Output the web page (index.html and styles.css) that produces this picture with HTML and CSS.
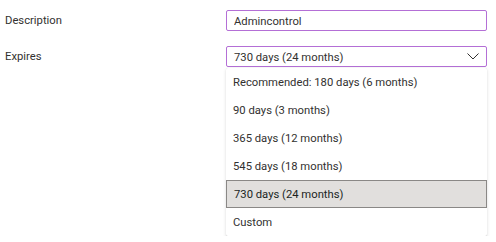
FILE: index.html
```html
<!DOCTYPE html>
<html lang="en">

<head>
  <meta charset="UTF-8">
  <title>Secret settings</title>
  <link rel="stylesheet" href="styles.css">
</head>

<body>

  <div class="form">
    <div class="form-row">
      <label class="form-label" for="description">Description</label>
      <div class="form-field">
        <input class="text-input" type="text" id="description" value="Admincontrol">
      </div>
    </div>

    <div class="form-row">
      <span class="form-label">Expires</span>
      <div class="form-field dropdown">
        <div class="dropdown-title">
          <span>730 days (24 months)</span>
          <svg class="chevron" width="12" height="7" viewBox="0 0 12 7">
            <path d="M0.5 0.5 L6 6 L11.5 0.5" fill="none" stroke="#323130" stroke-width="1"/>
          </svg>
        </div>

        <!-- open list of options -->
        <div class="dropdown-list">
          <div class="dropdown-item">Recommended: 180 days (6 months)</div>
          <div class="dropdown-item">90 days (3 months)</div>
          <div class="dropdown-item">365 days (12 months)</div>
          <div class="dropdown-item">545 days (18 months)</div>
          <div class="dropdown-item selected">730 days (24 months)</div>
          <div class="dropdown-item">Custom</div>
        </div>
      </div>
    </div>
  </div>

</body>

</html>
```

FILE: styles.css
```css
body {
  font-family: 'Roboto', 'Open Sans', sans-serif;
  font-size: 11.25px;
  color: #323130;
  margin: 0;
  padding: 0;
  background-color: #ffffff;
}

.form {
  padding: 10px 9px 0 5px;
}

.form-row {
  display: flex;
  align-items: flex-start;
  margin-bottom: 14px;
}

.form-row:last-child {
  margin-bottom: 0;
}

.form-label {
  width: 221px;
  flex-shrink: 0;
  line-height: 22px;
}

.form-field {
  flex: 1;
}

.text-input {
  display: block;
  width: 100%;
  height: 21px;
  box-sizing: border-box;
  margin: 0;
  padding: 1px 7px 0;
  border: 1px solid #b46fd6;
  border-radius: 2px;
  font-family: inherit;
  font-size: 11.25px;
  color: #323130;
  outline: none;
}

.dropdown-title {
  display: flex;
  align-items: center;
  justify-content: space-between;
  height: 21px;
  box-sizing: border-box;
  padding: 1px 7px 0;
  border: 1px solid #b46fd6;
  border-radius: 2px;
}

.chevron {
  margin-top: -1px;
}

.dropdown-list {
  margin-top: 1px;
  background-color: #ffffff;
  box-shadow: 0 1.6px 3.6px rgba(0, 0, 0, 0.13), 0 0.3px 0.9px rgba(0, 0, 0, 0.11);
  border-radius: 2px;
}

.dropdown-item {
  height: 28px;
  line-height: 29px;
  padding: 0 7px;
  box-sizing: border-box;
  white-space: nowrap;
}

.dropdown-item.selected {
  background-color: #e1dfdd;
  border: 1px solid #8a8886;
  line-height: 27px;
  color: #201f1e;
}
```
